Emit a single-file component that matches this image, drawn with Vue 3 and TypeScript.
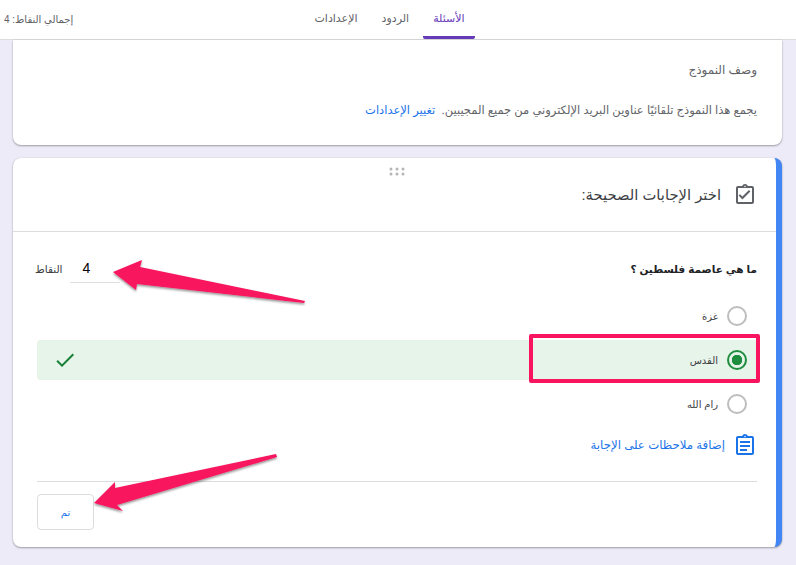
<script setup lang="ts">
const tabs = [
  { label: 'الأسئلة', active: true },
  { label: 'الردود', active: false },
  { label: 'الإعدادات', active: false },
]

const options = [
  { label: 'غزة', correct: false },
  { label: 'القدس', correct: true },
  { label: 'رام الله', correct: false },
]
</script>

<template>
  <div class="page" dir="rtl">
    <header class="topbar">
      <div></div>
      <nav class="tabs">
        <span v-for="tab in tabs" :key="tab.label" :class="['tab', { active: tab.active }]">
          {{ tab.label }}
        </span>
      </nav>
      <div class="total">إجمالي النقاط: 4</div>
    </header>

    <main class="content">
      <section class="card intro">
        <p class="desc">وصف النموذج</p>
        <p class="notice">
          يجمع هذا النموذج تلقائيًا عناوين البريد الإلكتروني من جميع المجيبين.
          <span class="link">تغيير الإعدادات</span>
        </p>
      </section>

      <section class="card quiz">
        <div class="drag">
          <svg width="16" height="9" viewBox="0 0 16 9">
            <g fill="#b5b5b5">
              <circle cx="2" cy="2" r="1.5" />
              <circle cx="8" cy="2" r="1.5" />
              <circle cx="14" cy="2" r="1.5" />
              <circle cx="2" cy="7" r="1.5" />
              <circle cx="8" cy="7" r="1.5" />
              <circle cx="14" cy="7" r="1.5" />
            </g>
          </svg>
        </div>

        <div class="quiz-head">
          <svg class="head-icon" width="24" height="24" viewBox="0 0 24 24">
            <path
              fill="#5f6368"
              d="M19 3h-4.18C14.4 1.84 13.3 1 12 1s-2.4.84-2.82 2H5c-1.1 0-2 .9-2 2v14c0 1.1.9 2 2 2h14c1.1 0 2-.9 2-2V5c0-1.1-.9-2-2-2zm-7-.25c.41 0 .75.34.75.75s-.34.75-.75.75-.75-.34-.75-.75.34-.75.75-.75zM19 19H5V5h14v14zm-1.6-10.6-1.4-1.4-6.6 6.6-2.4-2.4-1.4 1.4 3.8 3.8z"
            />
          </svg>
          <span>اختر الإجابات الصحيحة:</span>
        </div>

        <div class="quiz-body">
          <div class="question-row">
            <span class="question">ما هي عاصمة فلسطين ؟</span>
            <div class="points">
              <span class="points-value">4</span>
              <span class="points-label">النقاط</span>
            </div>
          </div>

          <div class="options">
            <div v-for="opt in options" :key="opt.label" :class="['option', { correct: opt.correct }]">
              <span :class="['radio', { checked: opt.correct }]"></span>
              <span class="option-label">{{ opt.label }}</span>
              <svg v-if="opt.correct" class="check" width="24" height="24" viewBox="0 0 24 24">
                <path fill="#188038" d="M9 16.2 4.8 12l-1.4 1.4L9 19 21 7l-1.4-1.4z" />
              </svg>
            </div>
          </div>

          <div class="feedback">
            <svg width="24" height="24" viewBox="0 0 24 24">
              <path
                fill="#1a73e8"
                d="M19 3h-4.18C14.4 1.84 13.3 1 12 1s-2.4.84-2.82 2H5c-1.1 0-2 .9-2 2v15c0 1.1.9 2 2 2h14c1.1 0 2-.9 2-2V5c0-1.1-.9-2-2-2zm-7-.25c.41 0 .75.34.75.75s-.34.75-.75.75-.75-.34-.75-.75.34-.75.75-.75zM19 20H5V5h14v15zM7 8h10v2H7zm0 4h10v2H7zm0 4h7v2H7z"
              />
            </svg>
            <span>إضافة ملاحظات على الإجابة</span>
          </div>

          <div class="quiz-foot">
            <button class="done" type="button">تم</button>
          </div>
        </div>
      </section>
    </main>

    <!-- التعليقات التوضيحية فوق لقطة الشاشة -->
    <div class="highlight"></div>
    <svg class="arrows" width="796" height="565" viewBox="0 0 796 565">
      <defs>
        <filter id="arrow-shadow" x="-10%" y="-30%" width="120%" height="160%">
          <feDropShadow dx="0" dy="1.5" stdDeviation="1.2" flood-color="#000" flood-opacity="0.45" />
        </filter>
      </defs>
      <g fill="#f8145f" filter="url(#arrow-shadow)">
        <path d="M113 272 142 260 140 267 305 301 304 303 137 284 136 290z" />
        <path d="M94 503 115 482 115 488 276 454 277 457 117 505 123 511z" />
      </g>
    </svg>
  </div>
</template>

<style>
html,
body {
  margin: 0;
  background: #edebf8;
  overflow: hidden;
}
</style>

<style scoped>
.page {
  position: relative;
  width: 796px;
  height: 565px;
  overflow: hidden;
  background: #edebf8;
  font-family: "Liberation Sans", "DejaVu Sans", sans-serif;
  color: #202124;
}

.topbar {
  display: grid;
  grid-template-columns: 1fr auto 1fr;
  align-items: center;
  height: 39px;
  padding: 0 21px 0 4px;
  background: #fff;
  border-bottom: 1px solid #dadce0;
}

.tabs {
  display: flex;
  align-self: stretch;
}

.tab {
  display: flex;
  align-items: center;
  justify-content: center;
  padding: 0 12px 3px;
  font-size: 11px;
  color: #5f6368;
}

.tab.active {
  color: #673ab7;
  margin: 0 2px;
  padding: 0 10px;
  border-bottom: 3px solid #673ab7;
  border-radius: 0 0 2px 2px;
}

.total {
  font-size: 10px;
  color: #5f6368;
  text-align: left;
}

.content {
  display: flex;
  flex-direction: column;
  gap: 13px;
  padding: 0 14px 0 13px;
}

.card {
  background: #fff;
  border-radius: 8px;
  box-shadow: 0 1px 2px rgba(60, 64, 67, 0.45), 0 0 1px rgba(60, 64, 67, 0.2);
}

.intro {
  height: 105px;
  padding: 23px 25px 0;
  border-radius: 0 0 8px 8px;
  box-sizing: border-box;
  color: #5f6368;
}

.desc {
  margin: 0 0 26px;
  font-size: 12px;
  line-height: 14px;
}

.notice {
  margin: 0;
  font-size: 11.5px;
  line-height: 14px;
}

.link {
  color: #1a73e8;
  margin-right: 3px;
}

.quiz {
  position: relative;
  height: 389px;
  box-sizing: border-box;
  border-right: 6px solid #4285f4;
}

.drag {
  position: absolute;
  top: 9px;
  left: 376px;
  line-height: 0;
}

.quiz-head {
  display: flex;
  align-items: center;
  gap: 12px;
  height: 73px;
  padding-right: 19px;
  border-bottom: 1px solid #dadce0;
  font-size: 14.75px;
  color: #3c4043;
}

.quiz-body {
  padding: 0 19px 0 24px;
}

.question-row {
  display: flex;
  align-items: center;
  justify-content: space-between;
  height: 73px;
}

.question {
  font-size: 10.5px;
  font-weight: 700;
  color: #202124;
}

.points {
  display: flex;
  align-items: center;
  gap: 7px;
  margin-left: -2px;
}

.points-value {
  width: 50px;
  height: 29px;
  box-sizing: border-box;
  padding-left: 13px;
  border-bottom: 1px solid #e0e0e0;
  font-size: 14px;
  line-height: 28px;
  text-align: left;
  color: #000;
}

.points-label {
  font-size: 10.5px;
  color: #3c4043;
}

.options {
  display: flex;
  flex-direction: column;
  gap: 4px;
  margin-top: -9px;
}

.option {
  position: relative;
  display: flex;
  align-items: center;
  gap: 9px;
  height: 40px;
  padding-right: 10px;
  border-radius: 4px;
}

.option.correct {
  background: #e6f4ea;
}

.radio {
  width: 20px;
  height: 20px;
  box-sizing: border-box;
  flex: none;
  border: 2px solid #bdbdbd;
  border-radius: 50%;
}

.radio.checked {
  border-color: #1e8e3e;
  background: radial-gradient(circle, #1e8e3e 0 5px, transparent 5.5px);
}

.option-label {
  font-size: 10px;
  color: #3c4043;
}

.check {
  position: absolute;
  left: 16px;
  top: 8px;
}

.feedback {
  display: flex;
  align-items: center;
  gap: 8px;
  height: 24px;
  margin-top: 9px;
  font-size: 11.75px;
  color: #1a73e8;
}

.quiz-foot {
  margin-top: 24px;
  padding-top: 12px;
  border-top: 1px solid #dadce0;
}

.done {
  display: block;
  width: 57px;
  height: 36px;
  margin-right: auto;
  padding: 0;
  background: #fff;
  border: 1px solid #dadce0;
  border-radius: 4px;
  font: inherit;
  font-size: 10px;
  color: #1a73e8;
}

.highlight {
  position: absolute;
  left: 529px;
  top: 334px;
  width: 231px;
  height: 49px;
  box-sizing: border-box;
  border: 4px solid #f8145f;
  border-radius: 2px;
}

.arrows {
  position: absolute;
  left: 0;
  top: 0;
  pointer-events: none;
}
</style>
